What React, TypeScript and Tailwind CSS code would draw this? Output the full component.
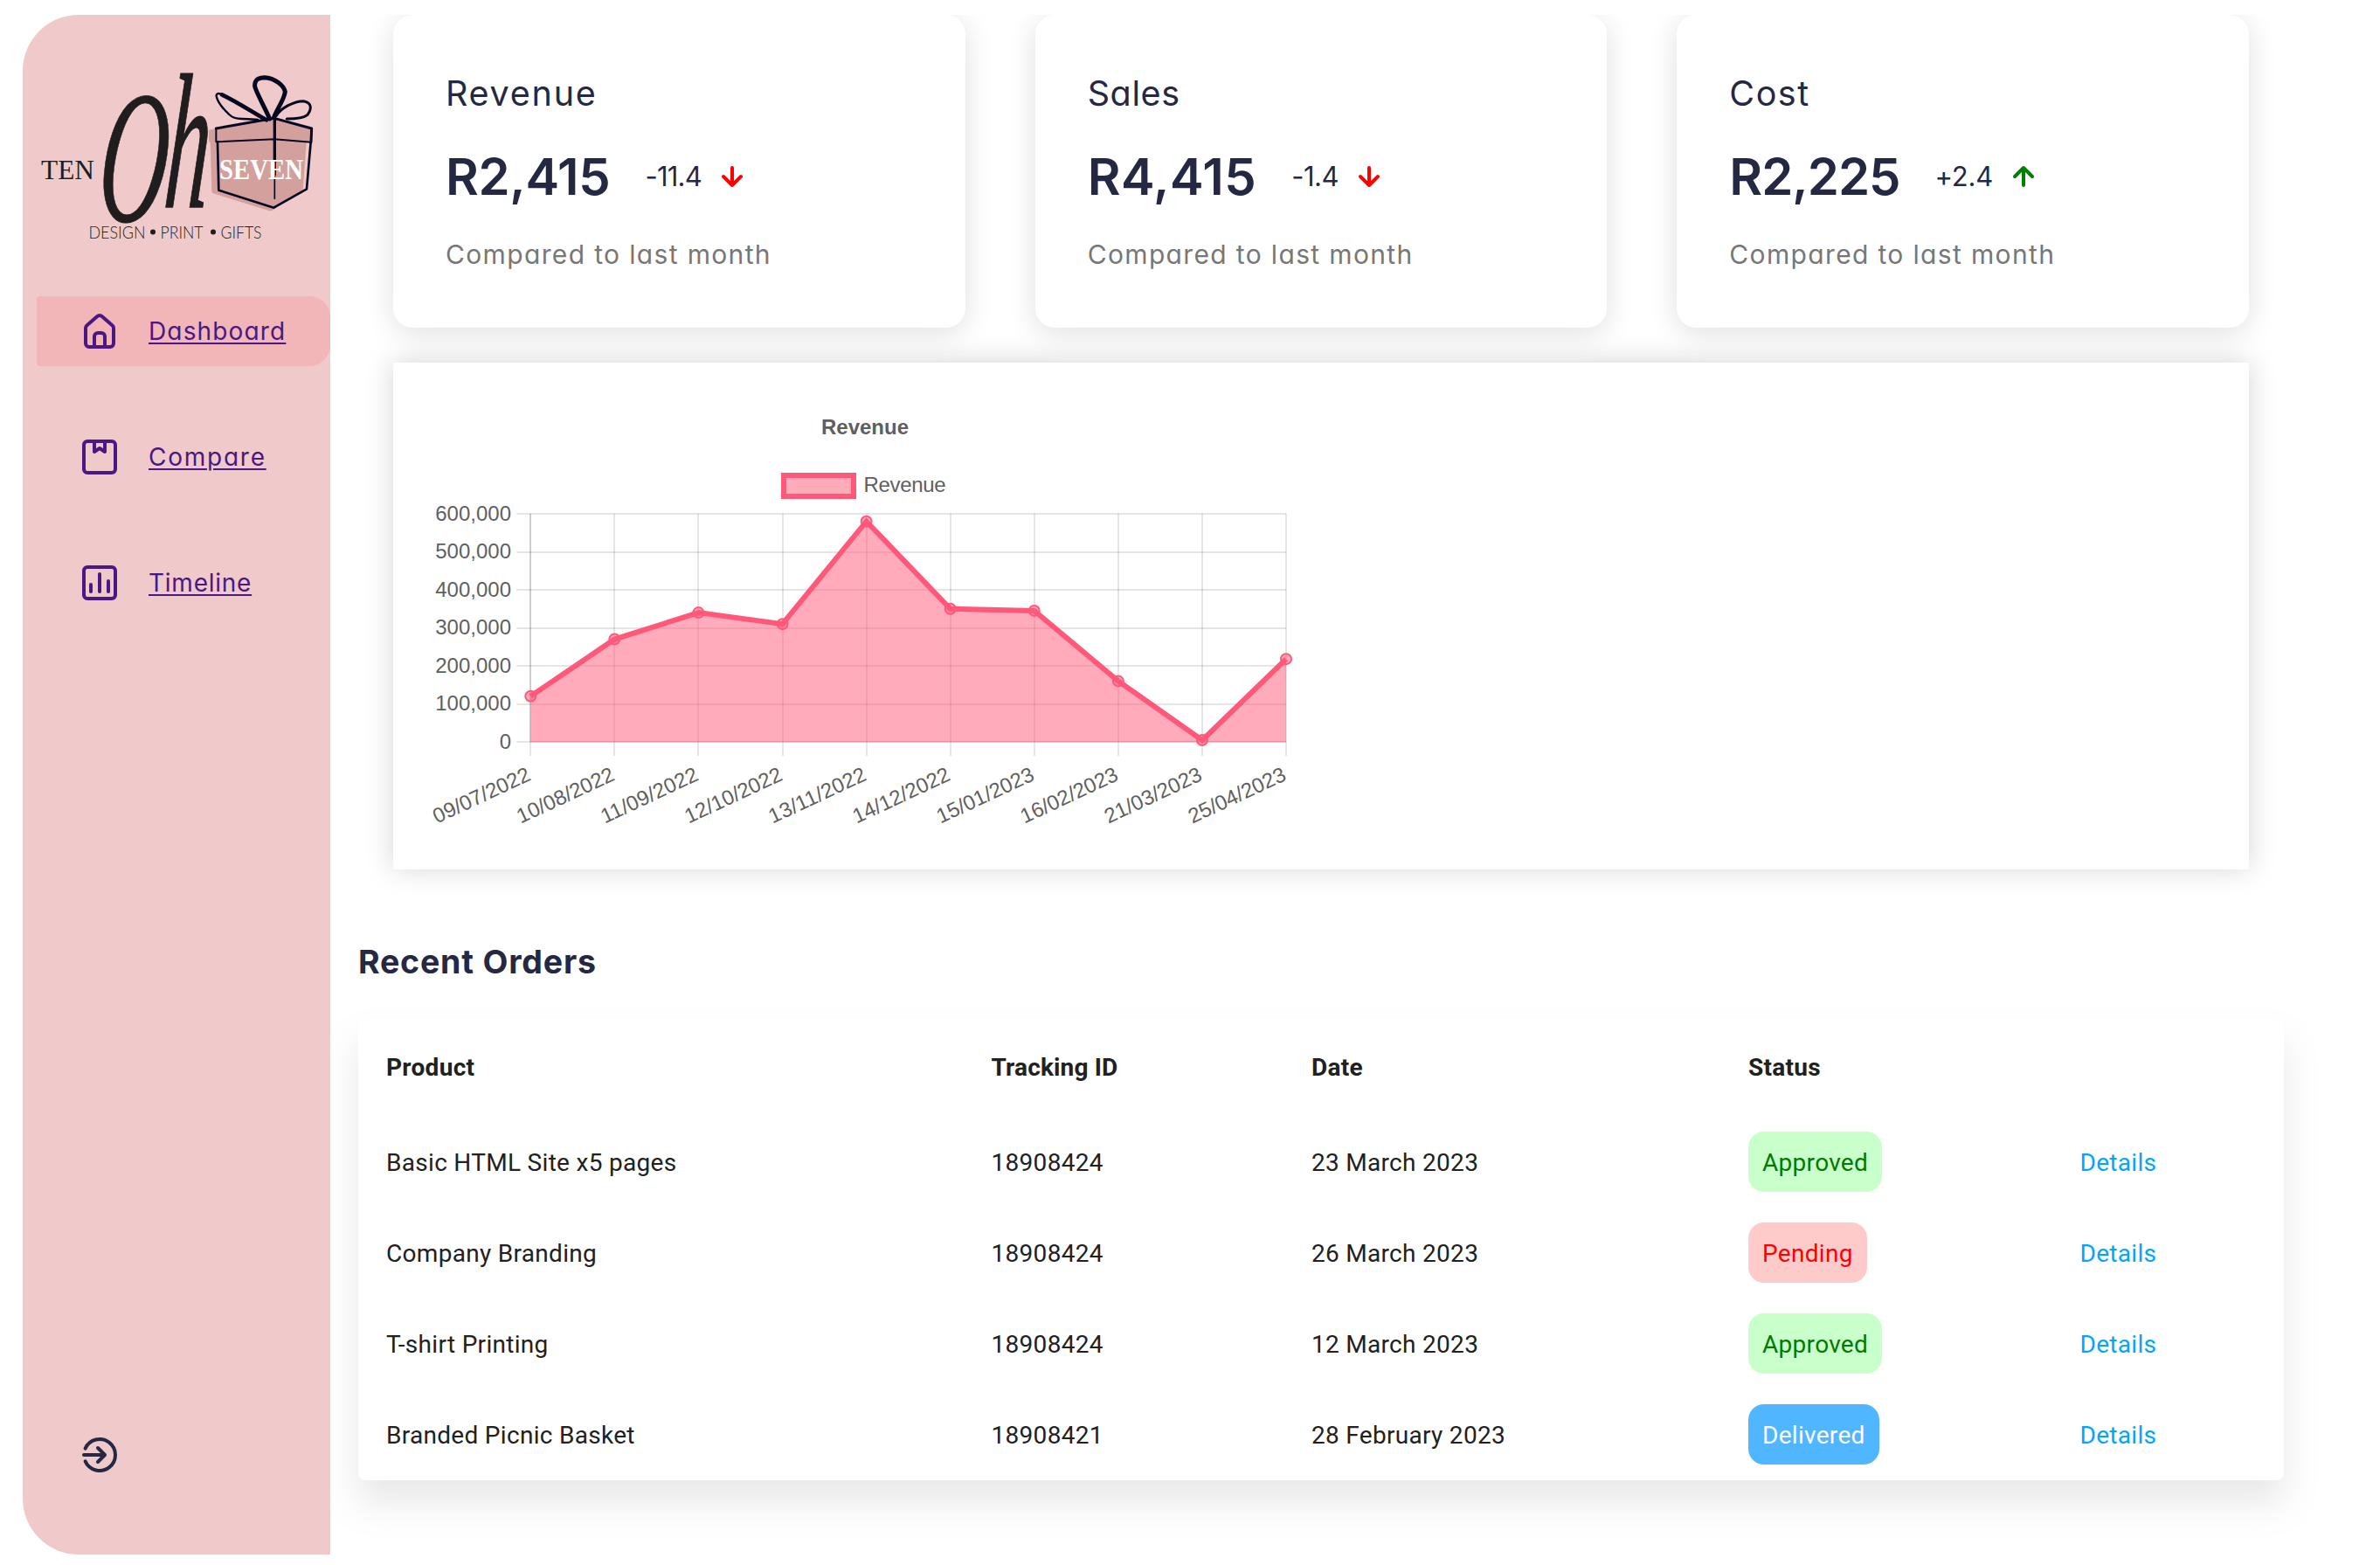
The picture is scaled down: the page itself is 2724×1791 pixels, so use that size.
import React from "react";

const POP = "font-['Inter',sans-serif] [font-feature-settings:'cv11']";

function Logo() {
  return (
    <svg className="block h-[322px] w-[352px] shrink-0" viewBox="26 17 352 322">
      <g fill="#1f1d1d">
        <text x="47" y="205" fontSize="32" textLength="61" lengthAdjust="spacingAndGlyphs" fontFamily="Liberation Serif, serif">TEN</text>
        <g fontFamily="Liberation Serif, serif" fontStyle="italic" stroke="#1f1d1d">
          <text transform="translate(109 253) skewX(-5) scale(0.5 1)" fontSize="217" strokeWidth="1">O</text>
          <text transform="translate(186 237) skewX(-4) scale(0.46 1)" fontSize="220" strokeWidth="1.500">h</text>
        </g>
        <g fontFamily="Lato, sans-serif" fontWeight="300" fontSize="19.5">
          <text x="101.500" y="272.600" textLength="65" lengthAdjust="spacingAndGlyphs">DESIGN</text>
          <text x="183.500" y="272.600" textLength="49" lengthAdjust="spacingAndGlyphs">PRINT</text>
          <text x="252.500" y="272.600" textLength="47" lengthAdjust="spacingAndGlyphs">GIFTS</text>
        </g>
        <circle cx="175" cy="265.500" r="3" />
        <circle cx="244" cy="265.500" r="3" />
      </g>
      <g transform="scale(0.333333)" strokeLinejoin="round" strokeLinecap="round">
        <path d="M717 446L942 408L1070 442L1066 490H1052L1040 652L936 722Q930 726 920 722L732 664Q727 662 727 656L722 490Q717 489 717 482Z" fill="#d4a09d" />
        <g fill="none" stroke="#050722">
          <path d="M742 441L942 406L1070 441L1068 488" strokeWidth="9" />
          <path d="M742 441V487L942 478L1068 488" strokeWidth="6" />
          <path d="M747 488L751 653L940 713L1053 649L1067 488" strokeWidth="8" />
          <path d="M943 405V600" strokeWidth="10" />
          <path d="M943 600V682" strokeWidth="5" />
          <path d="M770 327C750 317 742 320 743 331C748 350 768 376 788 394C800 407 815 408 830 408C850 409 870 410 885 411" strokeWidth="7" />
          <path d="M915 412C870 387 815 350 762 325" strokeWidth="14" />
          <path d="M926 408C910 370 880 318 875 297C873 272 890 266 908 266C945 268 975 295 979 315C975 345 950 375 941 402" strokeWidth="15" />
          <path d="M948 398C965 370 1010 347 1042 347C1072 352 1070 375 1056 394C1042 406 1015 408 985 408" strokeWidth="9" />
        </g>
      </g>
      <text x="251" y="204.500" fontSize="33" fontWeight="700" fill="#fff" textLength="96" lengthAdjust="spacingAndGlyphs" fontFamily="Liberation Serif, serif">SEVEN</text>
    </svg>
  );
}

const svgLine = { fill: "none", stroke: "currentColor", strokeWidth: 2, strokeLinecap: "round", strokeLinejoin: "round" } as const;

function HomeIcon() {
  return (
    <svg className="size-12" viewBox="0 0 24 24" fill="currentColor">
      <path d="M20,8h0L14,2.74a3,3,0,0,0-4,0L4,8a3,3,0,0,0-1,2.26V19a3,3,0,0,0,3,3H18a3,3,0,0,0,3-3V10.25A3,3,0,0,0,20,8ZM14,20H10V15a1,1,0,0,1,1-1h2a1,1,0,0,1,1,1Zm5-1a1,1,0,0,1-1,1H16V15a3,3,0,0,0-3-3H11a3,3,0,0,0-3,3v5H6a1,1,0,0,1-1-1V10.25a1,1,0,0,1,.34-.75l6-5.25a1,1,0,0,1,1.32,0l6,5.25a1,1,0,0,1,.34.75Z" />
    </svg>
  );
}

function PackageIcon() {
  return (
    <svg className="size-12" viewBox="0 0 24 24" {...svgLine}>
      <rect x="3" y="3" width="18" height="18" rx="2" />
      <path d="M9 3v6l3-2 3 2V3" />
    </svg>
  );
}

function ChartIcon() {
  return (
    <svg className="size-12" viewBox="0 0 24 24" {...svgLine}>
      <rect x="3" y="3" width="18" height="18" rx="2" />
      <path d="M7 13v4M12 7v10M17 11v6" />
    </svg>
  );
}

function SignOutIcon() {
  return (
    <svg className="size-12" viewBox="0 0 24 24" {...svgLine}>
      <path d="M3.800 8.300A9 9 0 1 1 3.800 15.700M3 12h12M11 8l4 4-4 4" />
    </svg>
  );
}

function ArrowIcon({ up }: { up: boolean }) {
  return (
    <svg className={up ? "size-12 text-[#008000]" : "size-12 rotate-180 text-[#ff0000]"} viewBox="0 0 24 24" {...svgLine}>
      <path d="M12 17V7M7 12l5-5 5 5" />
    </svg>
  );
}

const navItems = [
  { label: "Dashboard", icon: <HomeIcon />, active: true, track: "tracking-[1.15px]" },
  { label: "Compare", icon: <PackageIcon />, active: false, track: "tracking-[1.75px]" },
  { label: "Timeline", icon: <ChartIcon />, active: false, track: "tracking-[0.75px]" },
];

function Sidebar() {
  return (
    <aside className="mt-[17px] ml-[26px] flex h-[1762px] w-[352px] shrink-0 flex-col rounded-l-[64px] bg-[#f0caca]">
      <Logo />
      <nav className="flex flex-col gap-16 pl-4">
        {navItems.map((item) => (
          <a
            key={item.label}
            className={`flex h-20 items-center rounded-l-[4px] rounded-r-[24px] pl-12 text-[#4b1782] ${item.active ? "bg-[#f2b5b8]" : ""}`}
          >
            {item.icon}
            <span className={`ml-8 text-[28px] leading-[42px] underline decoration-2 underline-offset-[3px] ${POP} ${item.track}`}>{item.label}</span>
          </a>
        ))}
      </nav>
      <div className="mt-auto mb-[90px] ml-16 text-[#242842]">
        <SignOutIcon />
      </div>
    </aside>
  );
}

const stats = [
  { title: "Revenue", value: "R2,415", delta: "-11.4", up: false, tt: "tracking-[1.75px]", vt: "tracking-[-0.3px]", dt: "tracking-[-0.8px]" },
  { title: "Sales", value: "R4,415", delta: "-1.4", up: false, tt: "tracking-[0.6px]", vt: "tracking-[0.45px]", dt: "tracking-[-0.5px]" },
  { title: "Cost", value: "R2,225", delta: "+2.4", up: true, tt: "tracking-[1.5px]", vt: "tracking-[-1px]", dt: "tracking-[-0.2px]" },
];

function StatCard({ title, value, delta, up, tt, vt, dt }: (typeof stats)[number]) {
  return (
    <section className={`h-[358px] rounded-[22px] bg-white pt-[60px] pl-[60px] text-[#242842] shadow-[0_6px_32px_rgba(0,0,0,0.13)] ${POP}`}>
      <h2 className={`text-[39.500px] leading-[60px] ${tt}`}>{title}</h2>
      <div className="mt-5 flex h-[90px] items-center">
        <span className={`text-[58px] leading-[90px] font-semibold ${vt}`}>{value}</span>
        <span className={`ml-10 text-[31px] leading-[48px] ${dt}`}>{delta}</span>
        <span className="ml-[11px]">
          <ArrowIcon up={up} />
        </span>
      </div>
      <p className="mt-[22px] text-[30px] leading-[45px] tracking-[1.35px] text-[#777777]">Compared to last month</p>
    </section>
  );
}

const series = [
  ["09/07/2022", 120000],
  ["10/08/2022", 270000],
  ["11/09/2022", 340000],
  ["12/10/2022", 310000],
  ["13/11/2022", 580000],
  ["14/12/2022", 350000],
  ["15/01/2023", 345000],
  ["16/02/2023", 160000],
  ["21/03/2023", 4500],
  ["25/04/2023", 218000],
] as const;

const X0 = 157.3;
const X1 = 1022;
const Y0 = 434;
const Y1 = 173;
const px = (i: number) => X0 + (i * (X1 - X0)) / (series.length - 1);
const py = (v: number) => Y0 - (v / 600000) * (Y0 - Y1);

function RevenueChart() {
  const line = series.map(([, v], i) => `${px(i)},${py(v)}`).join(" ");
  const ticks = [0, 100000, 200000, 300000, 400000, 500000, 600000];
  return (
    <svg className="block h-[582px] w-[1060px]" viewBox="0 0 1060 582" fontFamily="Liberation Sans, Arial, sans-serif" fontSize="24" fill="#5f5f5f">
      <text x="540" y="82" fontWeight="700" textAnchor="middle">Revenue</text>
      <rect x="447" y="129" width="80" height="24" fill="#ffabba" stroke="#ff5879" strokeWidth="6" />
      <text x="538.500" y="148" textLength="94">Revenue</text>
      <g stroke="#000" strokeOpacity="0.1" strokeWidth="2">
        {ticks.map((t) => (
          <line key={t} x1={X0 - 16} x2={X1} y1={Math.round(py(t))} y2={Math.round(py(t))} />
        ))}
        {series.map(([label], i) => (
          <line key={label} x1={Math.round(px(i))} x2={Math.round(px(i))} y1={Y1} y2={Y0 + 16} />
        ))}
        <line x1={157} x2={157} y1={Y1} y2={Y0} />
        <line x1={X0} x2={X1} y1={Y0} y2={Y0} />
      </g>
      {ticks.map((t) => (
        <text key={t} x="135" y={py(t) + 7.5} textAnchor="end">{t.toLocaleString("en-US")}</text>
      ))}
      {series.map(([label], i) => (
        <text key={label} transform={`translate(${px(i) + 1.5} ${Y0 + 43}) rotate(-25)`} textAnchor="end" textLength="120">{label}</text>
      ))}
      <polygon points={`${X0},${Y0} ${line} ${X1},${Y0}`} fill="#ff5879" fillOpacity="0.5" />
      <polyline points={line} fill="none" stroke="#ff5879" strokeWidth="6" strokeLinejoin="miter" />
      {series.map(([label, v], i) => (
        <circle key={label} cx={px(i)} cy={py(v)} r="6" fill="#ff5879" fillOpacity="0.5" stroke="#ff5879" strokeWidth="2" />
      ))}
    </svg>
  );
}

const orders = [
  { product: "Basic HTML Site x5 pages", id: "18908424", date: "23 March 2023", status: "Approved" },
  { product: "Company Branding", id: "18908424", date: "26 March 2023", status: "Pending" },
  { product: "T-shirt Printing", id: "18908424", date: "12 March 2023", status: "Approved" },
  { product: "Branded Picnic Basket", id: "18908421", date: "28 February 2023", status: "Delivered" },
];

const pill: Record<string, string> = {
  Approved: "bg-[#c9ffcb] text-[#007a00]",
  Pending: "bg-[#ffcaca] text-[#ff0000]",
  Delivered: "bg-[#4fb6ff] text-white",
};

const rowGrid = "grid grid-cols-[692.5px_366.5px_500px_379.5px_265.5px] items-center *:pl-8";

function OrdersTable() {
  return (
    <div className="h-[528px] w-[2204px] rounded-[8px] bg-white font-[Roboto,sans-serif] text-[28px] leading-[40px] tracking-[0.3px] text-[#212121] shadow-[0_26px_40px_rgba(128,128,128,0.18)]">
      <div className={`h-28 font-bold ${rowGrid}`}>
        <span>Product</span>
        <span className="tracking-[0.15px]">Tracking ID</span>
        <span>Date</span>
        <span>Status</span>
      </div>
      {orders.map((o) => (
        <div key={o.product} className={`h-[104px] ${rowGrid}`}>
          <span className="pt-[2px]">{o.product}</span>
          <span className="pt-[2px]">{o.id}</span>
          <span className="pt-[2px]">{o.date}</span>
          <div className="pb-px">
            <span className={`flex h-[69px] w-fit items-center rounded-[18px] px-4 pt-[3px] ${pill[o.status]}`}>{o.status}</span>
          </div>
          <a className="pt-[2px] text-[#00a6ff]">Details</a>
        </div>
      ))}
    </div>
  );
}

export default function App() {
  return (
    <div className="flex h-[1791px] w-[2724px] overflow-hidden bg-white">
      <Sidebar />
      <main className="mt-[17px] h-[1762px] flex-1 overflow-hidden pl-8">
        <div className="mx-10 grid w-[2124px] grid-cols-3 gap-20">
          {stats.map((s) => (
            <StatCard key={s.title} {...s} />
          ))}
        </div>
        <section className="mt-10 ml-10 h-[580px] w-[2124px] bg-white shadow-[0_-1px_30px_rgba(0,0,0,0.17)]">
          <RevenueChart />
        </section>
        <h3 className={`mt-[78px] mb-[37px] text-[37.500px] leading-[56px] font-bold tracking-[0.8px] text-[#242842] ${POP}`}>Recent Orders</h3>
        <OrdersTable />
      </main>
    </div>
  );
}
